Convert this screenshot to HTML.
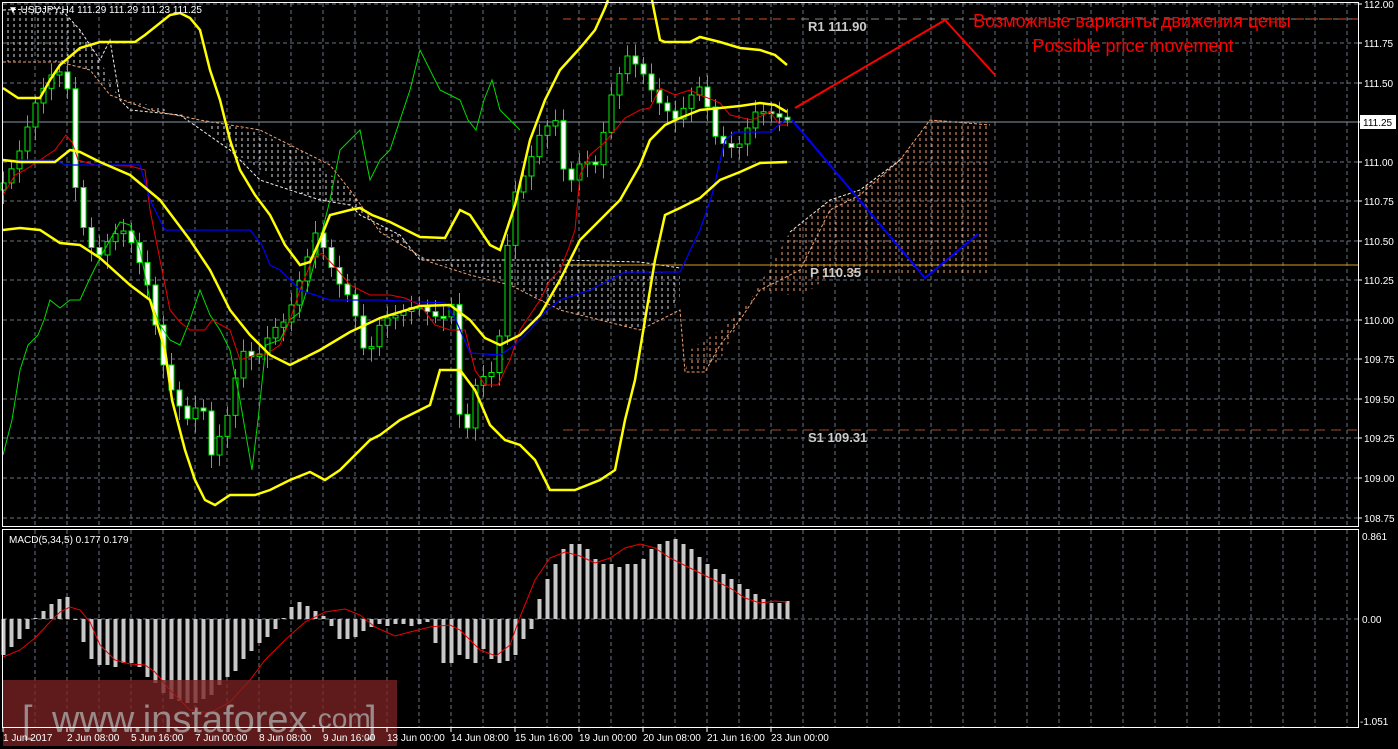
<!DOCTYPE html>
<html><head><meta charset="utf-8"><style>
html,body{margin:0;padding:0;background:#000;width:1398px;height:749px;overflow:hidden}
svg{display:block}
text{font-family:"Liberation Sans",sans-serif}
</style></head><body>
<svg id="s" width="1398" height="749" viewBox="0 0 1398 749" xmlns="http://www.w3.org/2000/svg">
<defs>
<pattern id="pw" width="6" height="6" patternUnits="userSpaceOnUse"><line x1="2" y1="0" x2="2" y2="3" stroke="#ddd" stroke-width="1"/></pattern>
<pattern id="po" width="6" height="6" patternUnits="userSpaceOnUse"><line x1="2" y1="0" x2="2" y2="3" stroke="#f0a070" stroke-width="1"/></pattern>
</defs>
<g id="grid"></g>
<polygon fill="url(#pw)" points="3,10 60,8 80,30 100,60 120,100 150,110 200,120 230,150 290,190 320,200 350,205 360,215 380,225 400,235 420,260 460,260 480,262 520,262 560,262 600,262 640,270 680,275 680,300 640,330 600,320 560,310 520,290 500,280 460,270 430,260 400,245 380,230 350,190 300,150 250,130 200,120 150,105 120,100 90,70 60,62 30,60 3,62"/>
<polygon fill="url(#po)" points="790,232 830,200 860,190 900,160 930,120 990,122 990,276 950,276 900,276 860,276 830,276 810,290 790,295 760,290 740,320 720,360 700,372 685,372 690,350 720,330 750,300 780,250"/>
<polyline fill="none" stroke="#eee" stroke-dasharray="3,2" points="3,10 60,8 80,30 100,60 110,40 120,100 130,110 180,115 230,150 260,180 290,190 320,200 350,205 360,215 380,225 400,235 420,260 560,260 640,262 680,268"/>
<polyline fill="none" stroke="#f0a070" stroke-dasharray="3,2" points="3,62 30,62 60,62 90,70 110,95 150,110 200,120 260,130 300,150 330,165 350,190 380,232 430,262 470,275 510,285 560,310 600,320 640,330 680,310 685,372 705,372 720,345 740,320 760,290 800,270 830,210 860,195 900,160 930,120 990,125"/>
<polyline fill="none" stroke="#eee" stroke-dasharray="3,2" points="790,232 830,200 860,190 900,160"/>
<line x1="563" y1="19" x2="1358" y2="19" stroke="#888" stroke-dasharray="8,6"/>
<line x1="1240" y1="19" x2="1358" y2="19" stroke="#d05020" stroke-dasharray="8,6"/>
<line x1="563" y1="19" x2="800" y2="19" stroke="#d05020" stroke-dasharray="8,6"/>
<line x1="563" y1="265" x2="1358" y2="265" stroke="#d4a020"/>
<line x1="563" y1="430" x2="1358" y2="430" stroke="#a05030" stroke-dasharray="10,6"/>
<line x1="3" y1="122" x2="1358" y2="122" stroke="#8a96a6"/>
<text x="808" y="31" fill="#ccc" font-family="Liberation Mono" font-size="13" font-weight="bold">R1  111.90</text>
<text x="810" y="277" fill="#ccc" font-family="Liberation Mono" font-size="13" font-weight="bold">P  110.35</text>
<text x="808" y="442" fill="#ccc" font-family="Liberation Mono" font-size="13" font-weight="bold">S1  109.31</text>
<g id="candles"></g>
<polyline fill="none" stroke="#00dd00" stroke-width="1" points="3,455 12,420 20,370 28,345 38,335 44,320 50,300 60,308 70,300 80,300 90,278 100,258 110,240 120,222 130,225 140,250 150,300 160,325 170,340 180,345 190,320 200,290 210,315 220,330 230,350 240,400 252,470 258,420 266,345 280,340 290,320 300,312 310,280 320,240 330,200 340,150 350,140 360,130 370,180 380,160 390,150 400,120 410,90 420,50 430,70 440,90 450,95 460,100 468,120 476,130 484,100 492,80 500,110 510,120 520,130"/>
<polyline fill="none" stroke="#e00" stroke-width="1" points="3,195 15,175 25,170 40,160 55,150 66,135 72,142 78,160 95,165 130,166 145,170 150,210 160,260 170,310 180,322 190,330 205,330 212,320 230,330 240,360 255,355 265,355 280,345 290,320 300,290 312,260 322,253 336,268 350,285 370,295 390,295 405,298 420,305 435,325 450,330 465,330 475,370 485,385 498,385 510,360 520,330 540,300 550,280 560,270 568,250 575,230 580,175 590,155 605,142 625,118 640,110 650,108 660,88 675,95 690,90 700,95 713,100 720,103 730,115 752,120 770,112 780,125 788,125"/>
<polyline fill="none" stroke="#0000ff" stroke-width="1.2" points="3,160 20,160 40,160 55,160 65,165 100,165 140,165 150,200 165,230 200,230 250,230 262,245 270,265 280,270 300,290 330,300 380,300 445,303 455,318 470,353 500,355 515,345 530,330 545,312 560,300 590,290 610,280 625,272 680,272 700,230 712,195 725,140 735,132 770,132 785,120"/>
<g fill="none" stroke="#ffff00" stroke-width="2.5">
<polyline points="3,88 18,98 40,98 50,80 60,65 80,48 100,42 135,42 145,35 170,15 180,13 190,18 200,30 210,70 220,100 230,140 240,170 255,195 270,215 285,245 300,265 310,262 320,240 330,215 350,210 360,208 372,215 390,222 420,237 445,238 460,210 470,215 480,230 490,245 500,250 515,205 530,140 545,100 560,70 580,48 595,30 605,8 608,0"/>
<polyline points="652,0 660,40 665,42 690,42 700,37 720,42 740,48 760,50 775,55 787,65"/>
<polyline points="3,160 20,162 40,162 55,162 70,150 80,152 100,162 130,175 160,200 190,240 210,270 230,310 250,335 270,355 290,365 300,360 320,350 350,332 380,318 420,306 450,305 470,320 485,338 500,345 520,335 540,315 560,280 580,240 600,220 620,200 640,165 650,140 665,125 680,118 700,110 720,108 740,106 760,103 775,105 787,112"/>
<polyline points="3,230 20,228 40,230 60,243 80,245 100,258 130,285 150,300 165,350 172,400 185,450 195,480 205,500 215,505 230,495 255,495 270,490 290,480 310,472 325,480 340,470 355,455 370,440 380,435 400,420 420,410 430,405 440,370 460,370 475,390 490,425 505,440 520,445 535,460 550,490 575,490 600,480 615,470 625,420 635,380 645,320 655,260 665,215 680,208 700,198 720,180 740,172 760,163 787,162"/>
</g>
<polyline fill="none" stroke="#ff0000" stroke-width="2" points="795,108 945,20 995,75"/>
<polyline fill="none" stroke="#0000ff" stroke-width="2" points="792,120 925,278 978,234"/>
<text x="1132" y="27" fill="#ff0000" font-size="18" text-anchor="middle">Возможные варианты движения цены</text>
<text x="1133" y="52" fill="#ff0000" font-size="18" text-anchor="middle">Possible price movement</text>
<g id="macd"></g>
<polyline fill="none" stroke="#e00" stroke-width="1" points="3,657 20,650 35,638 50,622 60,612 70,607 80,610 90,622 100,645 115,660 130,664 145,665 155,672 170,690 190,710 210,713 230,702 250,680 265,660 285,640 305,622 325,612 345,609 360,615 375,627 395,636 410,632 430,627 450,625 460,630 480,650 496,656 510,645 520,617 535,580 550,558 565,552 580,556 595,563 610,558 625,548 640,544 655,548 670,558 690,568 710,578 730,588 745,598 760,603 775,601 787,602"/>
<rect x="3" y="680" width="394" height="66" fill="#7a2222" opacity="0.78"/>
<text x="22" y="732" fill="#9a8a8a" font-size="38">[</text>
<text x="52" y="732" fill="#9a8a8a" font-size="38">www.instaforex</text>
<text x="310" y="728" fill="#9a8a8a" font-size="28">.com</text>
<text x="366" y="732" fill="#9a8a8a" font-size="38">]</text>
<rect x="2.5" y="2.5" width="1356" height="524" fill="none" stroke="#fff"/>
<rect x="2.5" y="529.5" width="1356" height="198" fill="none" stroke="#fff"/>
<g id="axis" fill="#fff" font-size="10"></g>
<rect x="1360" y="115" width="36" height="14" fill="#fff"/>
<text x="1363" y="126" fill="#000" font-size="10">111.25</text>
<text x="8" y="13" fill="#fff" font-size="10">▼ USDJPY,H4  111.29 111.29 111.23 111.25</text>
<text x="9" y="543" fill="#fff" font-size="10">MACD(5,34,5) 0.177 0.179</text>
</svg>
<script>
(function(){
var NS="http://www.w3.org/2000/svg";
function el(p,t,a,txt){var e=document.createElementNS(NS,t);for(var k in a)e.setAttribute(k,a[k]);if(txt)e.textContent=txt;document.getElementById(p).appendChild(e);return e;}
var gy=[4,43,83,122,162,201,241,280,320,359,399,438,478,518];
var gl=["112.00","111.75","111.50","111.25","111.00","110.75","110.50","110.25","110.00","109.75","109.50","109.25","109.00","108.75"];
for(var x=35;x<1358;x+=32){el("grid","line",{x1:x,y1:3,x2:x,y2:526,stroke:"#6a7280","stroke-dasharray":"4,3"});el("grid","line",{x1:x,y1:530,x2:x,y2:727,stroke:"#6a7280","stroke-dasharray":"4,3"});}
for(var i=0;i<gy.length;i++){el("grid","line",{x1:3,y1:gy[i],x2:1358,y2:gy[i],stroke:"#6a7280","stroke-dasharray":"4,3"});el("axis","line",{x1:1358,y1:gy[i],x2:1362,y2:gy[i],stroke:"#fff"});if(i!=3)el("axis","text",{x:1364,y:gy[i]+4},gl[i]);}
el("grid","line",{x1:3,y1:619,x2:1358,y2:619,stroke:"#6a7280","stroke-dasharray":"4,3"});
el("axis","text",{x:1362,y:540},"0.861");el("axis","text",{x:1362,y:623},"0.00");el("axis","text",{x:1360,y:725},"-1.051");
var tl=["1 Jun 2017","2 Jun 08:00","5 Jun 16:00","7 Jun 00:00","8 Jun 08:00","9 Jun 16:00","13 Jun 00:00","14 Jun 08:00","15 Jun 16:00","19 Jun 00:00","20 Jun 08:00","21 Jun 16:00","23 Jun 00:00"];
for(var i=0;i<tl.length;i++){var tx=3+64*i;el("axis","line",{x1:tx,y1:728,x2:tx,y2:732,stroke:"#fff"});el("axis","text",{x:tx,y:741},tl[i]);}
var kp=[[3,190],[20,160],[40,100],[55,75],[68,70],[76,120],[80,210],[100,260],[115,235],[130,230],[150,280],[160,330],[170,380],[190,420],[205,400],[215,455],[230,420],[245,350],[260,360],[275,330],[290,320],[310,260],[320,230],[340,280],[355,300],[370,360],[385,320],[400,315],[420,305],[445,320],[458,300],[465,460],[480,380],[500,370],[515,200],[530,170],[545,130],[560,120],[570,190],[585,160],[600,165],[615,95],[630,55],[645,70],[660,100],[680,120],[695,95],[705,85],[720,140],[740,150],[760,110],[780,115],[787,120]];
function py(x){for(var i=1;i<kp.length;i++){if(x<=kp[i][0]){var a=kp[i-1],b=kp[i];return a[1]+(b[1]-a[1])*(x-a[0])/(b[0]-a[0]);}}return 120;}
var prev=py(3);
for(var x=3;x<=787;x+=8){var c=py(x+4);var o=prev;var n=Math.sin(x*1.7)*6;var hi=Math.min(o,c)-6-Math.abs(n);var lo=Math.max(o,c)+6+Math.abs(Math.cos(x)*8);
el("candles","line",{x1:x+0.5,y1:hi,x2:x+0.5,y2:lo,stroke:"#00ee00"});
var bt=Math.min(o,c),h=Math.max(2,Math.abs(c-o));
el("candles","rect",{x:x-2,y:bt,width:5,height:h,fill:(c>o?"#fff":"#000"),stroke:"#00ee00"});prev=c;}
var mv=[-36,-28,-20,-10,1,8,15,20,22,-1,-23,-40,-46,-46,-48,-44,-44,-48,-58,-64,-74,-80,-82,-84,-84,-80,-76,-66,-58,-52,-40,-32,-24,-18,-10,1,12,17,13,8,3,-7,-20,-20,-18,-12,-8,-5,-7,-5,-5,-7,-5,-3,-24,-44,-44,-36,-40,-44,-30,-40,-44,-42,-36,-20,-10,20,40,55,70,75,75,70,60,55,55,52,55,55,60,70,75,78,80,75,70,62,55,50,45,40,35,30,25,20,16,16,18,18,18];
for(var i=0;i<mv.length;i++){var x=3+8*i;if(x>790)break;var v=mv[i];el("macd","rect",{x:x-1.5,y:v>0?619-v:619,width:4,height:Math.max(1,Math.abs(v)),fill:"#c8c8c8"});}
})();
</script>
</body></html>
